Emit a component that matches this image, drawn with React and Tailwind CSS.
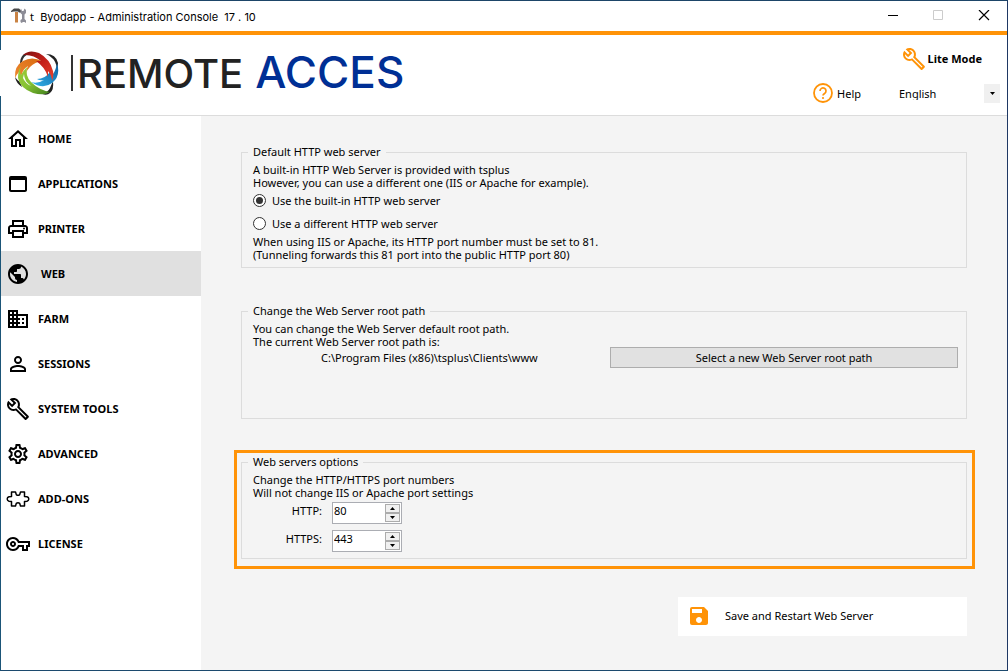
import { useState } from 'react';
import {
    MdOutlineHome,
    MdWebAsset,
    MdOutlinePrint,
    MdPublic,
    MdDomain,
    MdPersonOutline,
    MdOutlineBuild,
    MdOutlineSettings,
    MdOutlineVpnKey,
    MdSave,
} from 'react-icons/md';

// --- ICONS ---
function PuzzleIcon({ className }) {
    return (
        <svg viewBox="0 0 24 24" className={className} fill="none" stroke="currentColor" strokeWidth="1.5" strokeLinejoin="round">
            <path d="M5.500 5h4l.8 2.600q1.700 1.400 3.400 0L14.500 5h4v4.500l2.500.3q1.800.6 1.800 2.200t-1.800 2.200l-2.500.3V19h-4l-.8-2.600q-1.700-1.400-3.400 0L9.500 19h-4v-4.500L3 14.200Q1.200 13.600 1.200 12T3 9.800l2.500-.3z" />
        </svg>
    );
}

function HelpIcon() {
    return (
        <svg viewBox="0 0 20 20" className="size-5 text-[#ff9307]" fill="none" stroke="currentColor">
            <circle cx="10" cy="10" r="9" strokeWidth="1.8" />
            <path d="M7 8a3 3 0 1 1 4.6 2.5C10.500 11.200 10 11.600 10 12.600" strokeWidth="1.700" />
            <circle cx="10" cy="15" r="1.100" fill="currentColor" stroke="none" />
        </svg>
    );
}

function ToolsIcon() {
    return (
        <svg viewBox="0 0 15 16" className="h-4 w-[15px]">
            <path d="M0 3 3 0.500h5l2 2v2H8L7 3.500H3L0 4z" fill="#4a4a4a" />
            <path d="M4 4h3v10.500H4z" fill="#c98344" />
            <path d="M10 0.500 11 3h1.500L13.500 0.500 15 2v3l-1.500 1.500V11l1.500 1.500v2.500l-1.500-1h-1.500l-1.500 1-1-1V12l1.500-1V6.500L9.500 5V2z" fill="#8d8d97" />
        </svg>
    );
}

function Orb() {
    return (
        <svg viewBox="0 0 46 46" className="h-[46px] w-[46px]">
            <defs>
                <linearGradient id="red" x1="0" y1="0" x2="1" y2="1">
                    <stop offset="0" stopColor="#7d1010" />
                    <stop offset="0.5" stopColor="#c4201a" />
                    <stop offset="1" stopColor="#e8452e" />
                </linearGradient>
                <linearGradient id="orange" x1="1" y1="0" x2="0" y2="1">
                    <stop offset="0" stopColor="#d96a10" />
                    <stop offset="1" stopColor="#ee8a32" />
                </linearGradient>
                <linearGradient id="green" x1="0" y1="0" x2="1" y2="1">
                    <stop offset="0" stopColor="#9ccc3a" />
                    <stop offset="0.5" stopColor="#86c232" />
                    <stop offset="1" stopColor="#3f7f1c" />
                </linearGradient>
                <linearGradient id="blue" x1="0" y1="1" x2="1" y2="0">
                    <stop offset="0" stopColor="#35b4ec" />
                    <stop offset="1" stopColor="#0b5e9e" />
                </linearGradient>
            </defs>
            {/* dark rims */}
            <path d="M32 4Q42 4 44 13Q44 16 43 19Q42 11 38 8Q35 5 32 4z" fill="#222" />
            <path d="M1 27Q2 33 8 37L6 32Q3 30 1 27z" fill="#222" />
            <path d="M39 31Q40 40 36 43Q33 46 28 44Q34 42 36 38z" fill="#222" />
            <path d="M9 5Q6 8 6 14L8 12Q9 6 16 3Q12 3 9 5z" fill="#333" />
            {/* colour bands */}
            <path d="M1 28Q0 16 9 11Q18 6 28 11Q21 12 16 17Q13 20 12 23Q12 19 14 16Q9 19 8 24L6 29L5 22Q3 24 1 28z" fill="url(#orange)" />
            <path d="M43 13Q47 26 38 33Q29 40 17 32Q24 34 30 30Q26 31 23 29Q31 29 36 22L39 24Q42 20 43 13z" fill="url(#blue)" />
            <path d="M9 5Q15 -1 25 3Q36 9 39 21Q40 26 38 31Q38 26 34 21Q34 24 34 27Q31 17 22 11L27 11Q19 4 9 5z" fill="url(#red)" />
            <path d="M7 16Q5 20 7 25Q9 21 13 17Q11 26 17 32Q25 40 36 42Q30 46 19 43Q6 38 4 28Q4 20 7 16z" fill="url(#green)" />
            <path d="M10 24Q10 31 17 36Q11 33 9 28z" fill="#fff" />
        </svg>
    );
}

const MENU = [
    { label: 'HOME', Icon: MdOutlineHome },
    { label: 'APPLICATIONS', Icon: MdWebAsset },
    { label: 'PRINTER', Icon: MdOutlinePrint },
    { label: 'WEB', Icon: MdPublic },
    { label: 'FARM', Icon: MdDomain },
    { label: 'SESSIONS', Icon: MdPersonOutline },
    { label: 'SYSTEM TOOLS', Icon: MdOutlineBuild },
    { label: 'ADVANCED', Icon: MdOutlineSettings },
    { label: 'ADD-ONS', Icon: PuzzleIcon },
    { label: 'LICENSE', Icon: MdOutlineVpnKey },
];

// --- WINDOW CHROME ---
function TitleBar() {
    return (
        <div className="flex h-[34px] items-center border-b-4 border-[#ff9307] pr-[17px] pl-[10px]">
            <ToolsIcon />
            <h1 className="ml-1 flex-1 pt-px font-['Inter'] text-[11px]">
                <span className="font-['Noto_Sans']">t</span>&nbsp; Byodapp - Administration Console &nbsp;17 . 10
            </h1>
            <div className="flex gap-[33px]">
                <button type="button" aria-label="Minimize">
                    <svg viewBox="0 0 12 12" className="size-3"><path d="M0 5.500h10" stroke="#000" /></svg>
                </button>
                <button type="button" aria-label="Maximize" disabled>
                    <svg viewBox="0 0 12 12" className="size-3"><path d="M0.500 0.500h9v9h-9z" fill="none" stroke="#ccc" /></svg>
                </button>
                <button type="button" aria-label="Close">
                    <svg viewBox="0 0 12 12" className="size-3"><path d="m1 0 10 10M11 0 1 10" stroke="#000" strokeWidth="1.200" /></svg>
                </button>
            </div>
        </div>
    );
}

function Header() {
    return (
        <header className="flex h-[81px] justify-between border-b border-[#dcdcdc]">
            <div className="mt-[15px] -ml-px flex h-[46px] items-center bg-white pl-[14px]">
                <Orb />
                <div className="ml-[11px] h-9 w-[2px] bg-[#333]" />
                <div className="ml-1 flex items-baseline gap-3 font-['Inter'] text-[40px] leading-[46px] font-medium">
                    <span className="text-[#222]">REMOTE</span>
                    <span className="text-[44px] text-[#002f95]">ACCES</span>
                </div>
            </div>
            <div className="flex flex-col items-end gap-[10px] pt-3 pr-[7px]">
                <button type="button" className="mr-[18px] flex h-6 items-center gap-[2px] pb-px font-bold">
                    <MdOutlineBuild className="size-6 text-[#ff9307]" />
                    Lite Mode
                </button>
                <div className="flex h-6 items-center">
                    <a href="#help" className="flex items-center gap-1">
                        <HelpIcon />
                        Help
                    </a>
                    <div className="relative ml-[38px]">
                        <select aria-label="Language" className="h-[19px] w-[101px] appearance-none bg-white">
                            <option>English</option>
                        </select>
                        <span className="pointer-events-none absolute inset-y-0 right-0 flex w-4 items-center justify-center bg-[#f0f0f0]">
                            <svg viewBox="0 0 5 3" className="h-[3px] w-[5px]"><path d="M0 0h5L2.500 3z" /></svg>
                        </span>
                    </div>
                </div>
            </div>
        </header>
    );
}

function Sidebar({ active, onSelect }) {
    return (
        <nav className="w-[200px] shrink-0 bg-white">
            {MENU.map(({ label, Icon }) => (
                <button
                    key={label}
                    type="button"
                    onClick={() => onSelect(label)}
                    className={`flex h-[45px] w-full items-center pl-[5px] font-bold ${
                        active === label ? 'gap-[11px] bg-[#e0e0e0]' : 'gap-2'
                    }`}
                >
                    <Icon className="size-6" />
                    {label}
                </button>
            ))}
        </nav>
    );
}

// --- FORM PARTS ---
function Group({ title, className, children }) {
    return (
        <fieldset className={`border border-[#dcdcdc] pt-[3px] pr-2 pl-[11px] ${className}`}>
            <legend className="-ml-[5px] px-[5px] leading-4">{title}</legend>
            {children}
        </fieldset>
    );
}

function ServerRadio({ value, current, onChange, children }) {
    return (
        <label className="flex h-[23px] items-center gap-[6px]">
            <input
                type="radio"
                name="server"
                value={value}
                checked={current === value}
                onChange={() => onChange(value)}
                className="size-[13px] appearance-none rounded-full border border-[#333] bg-white bg-clip-padding p-[2px] before:block before:size-[7px] before:rounded-full checked:before:bg-[#333]"
            />
            {children}
        </label>
    );
}

function PortField({ id, label, value, onChange }) {
    return (
        <div className="flex gap-[10px]">
            <label htmlFor={id} className="w-[69px] pt-px text-right leading-4">{label}</label>
            <div className="flex h-[22px] w-[70px] border border-[#abadb3] bg-white p-px">
                <input
                    id={id}
                    value={value}
                    onChange={(e) => onChange(Number(e.target.value) || 0)}
                    className="h-3 w-0 flex-1 outline-none"
                />
                <div className="flex w-[15px] flex-col">
                    <button type="button" aria-label={`Increase ${label}`} onClick={() => onChange(value + 1)} className="flex flex-1 items-center justify-center border border-[#acacac] bg-[#f0f0f0]">
                        <svg viewBox="0 0 5 3" className="h-[3px] w-[5px]"><path d="M0 3h5L2.500 0z" /></svg>
                    </button>
                    <button type="button" aria-label={`Decrease ${label}`} onClick={() => onChange(value - 1)} className="flex flex-1 items-center justify-center border border-[#acacac] bg-[#f0f0f0]">
                        <svg viewBox="0 0 5 3" className="h-[3px] w-[5px]"><path d="M0 0h5L2.500 3z" /></svg>
                    </button>
                </div>
            </div>
        </div>
    );
}

function WebPage() {
    const [server, setServer] = useState('builtin');
    const [http, setHttp] = useState(80);
    const [https, setHttps] = useState(443);

    return (
        <main className="flex flex-1 flex-col bg-[#f4f4f4] pt-7 pr-8 pb-8 pl-[33px]">
            <Group title="Default HTTP web server" className="mr-2 ml-[7px] pb-[6px]">
                <p>A built-in HTTP Web Server is provided with tsplus</p>
                <p>However, you can use a different one (IIS or Apache for example).</p>
                <ServerRadio value="builtin" current={server} onChange={setServer}>Use the built-in HTTP web server</ServerRadio>
                <ServerRadio value="other" current={server} onChange={setServer}>Use a different HTTP web server</ServerRadio>
                <p>When using IIS or Apache, its HTTP port number must be set to 81.</p>
                <p>(Tunneling forwards this 81 port into the public HTTP port 80)</p>
            </Group>

            <Group title="Change the Web Server root path" className="mt-[35px] mr-2 ml-[7px] pb-[50px]">
                <div className="flex">
                    <div className="w-[357px]">
                        <p>You can change the Web Server default root path.</p>
                        <p>The current Web Server root path is:</p>
                        <p className="mt-[3px] pl-[68px]">C:\Program Files (x86)\tsplus\Clients\www</p>
                    </div>
                    <button type="button" className="mt-[25px] h-[21px] flex-1 border border-[#adadad] bg-[#e1e1e1]">
                        Select a new Web Server root path
                    </button>
                </div>
            </Group>

            {/* Highlighted section */}
            <section className="mt-[31px] border-3 border-[#ff9307] px-1 pt-px pr-[5px] pb-[7px]">
                <Group title="Web servers options" className="pb-[6px]">
                    <p>Change the HTTP/HTTPS port numbers</p>
                    <p>Will not change IIS or Apache port settings</p>
                    <div className="mt-[3px] flex flex-col gap-[6px]">
                        <PortField id="http" label="HTTP:" value={http} onChange={setHttp} />
                        <PortField id="https" label="HTTPS:" value={https} onChange={setHttps} />
                    </div>
                </Group>
            </section>

            <button type="button" className="mt-7 mr-2 flex h-[39px] w-[289px] items-center gap-[14px] self-end bg-white pb-[2px] pl-[9px]">
                <MdSave className="size-6 text-[#ff9307]" />
                Save and Restart Web Server
            </button>
        </main>
    );
}

function App() {
    const [page, setPage] = useState('WEB');

    return (
        <div className="flex min-h-screen flex-col border border-t-[#1d4568] border-r-[#1f3864] border-b-[#1c4a6e] border-l-[#1b5578] bg-white font-['Noto_Sans',sans-serif] text-[11px] leading-[13px] text-black">
            <TitleBar />
            <Header />
            <div className="flex flex-1">
                <Sidebar active={page} onSelect={setPage} />
                <WebPage />
            </div>
        </div>
    );
}

export default App;
